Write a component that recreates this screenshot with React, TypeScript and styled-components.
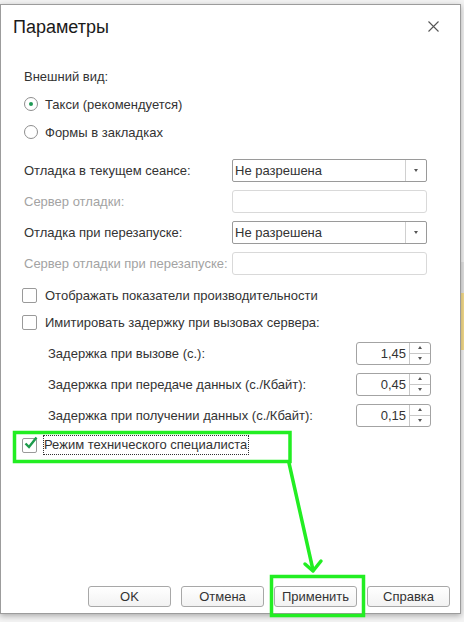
import styled, { createGlobalStyle } from 'styled-components';

const GlobalStyle = createGlobalStyle`
  html, body {
    margin: 0;
    padding: 0;
  }
  body {
    font-family: "Liberation Sans", Arial, sans-serif;
    color: #333;
    background: #fff;
  }
`;

const Page = styled.div`
  position: relative;
  width: 464px;
  height: 622px;
  overflow: hidden;
  padding-top: 4px;
  box-sizing: border-box;
  background:
    linear-gradient(to bottom,
      #f3f3f3 0, #f3f3f3 262px,
      #e4e4e4 262px, #e4e4e4 293px,
      #f6dc8c 293px, #f6dc8c 350px,
      #f4f4f4 350px, #f4f4f4 100%);
`;

const Dialog = styled.div`
  width: 461px;
  height: 610px;
  box-sizing: border-box;
  border: 1px solid #9c9c9c;
  background: #fff;
  box-shadow: 0 2px 6px rgba(0, 0, 0, 0.3);
  display: flex;
  flex-direction: column;
`;

const Header = styled.div`
  height: 57px;
  display: flex;
  align-items: flex-start;
  justify-content: space-between;
  padding: 10px 18px 0 12px;
  box-sizing: border-box;
`;

const Title = styled.div`
  font-size: 18px;
  line-height: 24px;
  color: #1a1a1a;
`;

const Close = styled.button`
  width: 14px;
  height: 14px;
  margin-top: 6px;
  padding: 0;
  border: none;
  background: none;
  display: flex;
`;

const Body = styled.div`
  flex: 1;
  display: flex;
  flex-direction: column;
`;

const Row = styled.div<{ $top?: number; $h?: number; $left?: number }>`
  height: ${p => p.$h ?? 24}px;
  margin-top: ${p => p.$top ?? 0}px;
  padding-left: ${p => p.$left ?? 23}px;
  display: flex;
  align-items: center;
  font-size: 13px;
`;

const FieldRow = styled(Row)`
  display: grid;
  grid-template-columns: 208px 195px;
  align-items: center;
`;

const DelayRow = styled(Row)`
  display: grid;
  grid-template-columns: 308px 75px;
  align-items: center;
`;

const Label = styled.span<{ $muted?: boolean }>`
  color: ${p => (p.$muted ? '#a3a3a3' : '#333')};
  white-space: nowrap;
`;

const RadioMark = styled.span<{ $on?: boolean }>`
  width: 12px;
  height: 12px;
  border: 1px solid #8e8e8e;
  border-radius: 50%;
  margin-right: 7px;
  display: flex;
  align-items: center;
  justify-content: center;
  background: #fff;
  &::after {
    content: '';
    width: 4px;
    height: 4px;
    border-radius: 50%;
    background: ${p => (p.$on ? '#1f9a55' : 'transparent')};
  }
`;

const Box = styled.span`
  width: 13px;
  height: 13px;
  border: 1px solid #9a9a9a;
  border-radius: 2px;
  margin-right: 8px;
  position: relative;
  flex-shrink: 0;
  background: #fff;
`;

const Tick = styled.svg`
  position: absolute;
  left: 1px;
  top: -3px;
`;

const Focused = styled.span`
  outline: 1px dotted #333;
  outline-offset: 0;
  padding: 1px 1px 2px 0;
  margin-left: -1px;
`;

const Select = styled.div`
  height: 23px;
  box-sizing: border-box;
  border: 1px solid #9a9a9a;
  border-radius: 2px;
  display: flex;
  align-items: stretch;
  background: #fff;
`;

const SelectText = styled.span`
  flex: 1;
  padding-left: 2px;
  display: flex;
  align-items: center;
  color: #333;
`;

const SelectBtn = styled.span`
  width: 20px;
  border-left: 1px solid #d0d0d0;
  display: flex;
  align-items: center;
  justify-content: center;
`;

const Arrow = styled.span<{ $up?: boolean }>`
  width: 0;
  height: 0;
  border-left: 2.5px solid transparent;
  border-right: 2.5px solid transparent;
  ${p => (p.$up ? 'border-bottom: 3px solid #555;' : 'border-top: 3px solid #555;')}
`;

const Input = styled.div`
  height: 23px;
  box-sizing: border-box;
  border: 1px solid #d9d9d9;
  border-radius: 3px;
  background: #fff;
`;

const Spin = styled.div`
  height: 23px;
  box-sizing: border-box;
  border: 1px solid #a3a3a3;
  border-radius: 3px;
  display: flex;
  background: #fff;
`;

const SpinValue = styled.span`
  flex: 1;
  text-align: right;
  padding-right: 3px;
  line-height: 21px;
  color: #333;
`;

const SpinBtns = styled.span`
  width: 20px;
  border-left: 1px solid #c8c8c8;
  display: flex;
  flex-direction: column;
`;

const SpinHalf = styled.span<{ $top?: boolean }>`
  flex: 1;
  display: flex;
  align-items: center;
  justify-content: center;
  ${p => (p.$top ? 'border-bottom: 1px solid #c8c8c8;' : '')}
`;

const Footer = styled.div`
  display: flex;
  justify-content: flex-end;
  gap: 10px;
  padding: 0 10px 6px 0;
`;

const Button = styled.button`
  width: 83px;
  height: 21px;
  box-sizing: border-box;
  border: 1px solid #a8a8a8;
  border-radius: 3px;
  background: linear-gradient(#ffffff, #f2f2f2);
  font-family: "Liberation Sans", Arial, sans-serif;
  font-size: 13px;
  color: #333;
  padding: 0;
`;

const Overlay = styled.svg`
  position: absolute;
  left: 0;
  top: 0;
  pointer-events: none;
`;

const Radio = ({ on, children }: { on?: boolean; children: string }) => (
  <>
    <RadioMark $on={on} />
    <Label>{children}</Label>
  </>
);

const Dropdown = ({ value }: { value: string }) => (
  <Select>
    <SelectText>{value}</SelectText>
    <SelectBtn><Arrow /></SelectBtn>
  </Select>
);

const Spinner = ({ value }: { value: string }) => (
  <Spin>
    <SpinValue>{value}</SpinValue>
    <SpinBtns>
      <SpinHalf $top><Arrow $up /></SpinHalf>
      <SpinHalf><Arrow /></SpinHalf>
    </SpinBtns>
  </Spin>
);

export default function App() {
  return (
    <Page>
      <GlobalStyle />
      <Dialog>
        <Header>
          <Title>Параметры</Title>
          <Close aria-label="Закрыть">
            <svg width="11" height="11" viewBox="0 0 11 11">
              <path d="M0.5 0.5L10.5 10.5M10.5 0.5L0.5 10.5" stroke="#555" strokeWidth="1.1" />
            </svg>
          </Close>
        </Header>
        <Body>
          <Row $h={28} $top={0}><Label>Внешний вид:</Label></Row>
          <Row $h={28}><Radio on>Такси (рекомендуется)</Radio></Row>
          <Row $h={28}><Radio>Формы в закладках</Radio></Row>

          <FieldRow $top={12}>
            <Label>Отладка в текущем сеансе:</Label>
            <Dropdown value="Не разрешена" />
          </FieldRow>
          <FieldRow $top={7}>
            <Label $muted>Сервер отладки:</Label>
            <Input />
          </FieldRow>
          <FieldRow $top={7}>
            <Label>Отладка при перезапуске:</Label>
            <Dropdown value="Не разрешена" />
          </FieldRow>
          <FieldRow $top={7}>
            <Label $muted>Сервер отладки при перезапуске:</Label>
            <Input />
          </FieldRow>

          <Row $h={27} $top={7} $left={21}>
            <Box />
            <Label>Отображать показатели производительности</Label>
          </Row>
          <Row $h={27} $left={21}>
            <Box />
            <Label>Имитировать задержку при вызовах сервера:</Label>
          </Row>

          <DelayRow $top={5} $left={47}>
            <Label>Задержка при вызове (с.):</Label>
            <Spinner value="1,45" />
          </DelayRow>
          <DelayRow $top={7} $left={47}>
            <Label>Задержка при передаче данных (с./Кбайт):</Label>
            <Spinner value="0,45" />
          </DelayRow>
          <DelayRow $top={7} $left={47}>
            <Label>Задержка при получении данных (с./Кбайт):</Label>
            <Spinner value="0,15" />
          </DelayRow>

          <Row $h={24} $top={6} $left={21}>
            <Box>
              <Tick width="14" height="14" viewBox="0 0 14 14">
                <path d="M1.5 7.5L5 11L12.5 1.5" fill="none" stroke="#1d9b4c" strokeWidth="2.4" />
              </Tick>
            </Box>
            <Focused>Режим технического специалиста</Focused>
          </Row>
        </Body>
        <Footer>
          <Button>OK</Button>
          <Button>Отмена</Button>
          <Button>Применить</Button>
          <Button>Справка</Button>
        </Footer>
      </Dialog>

      <Overlay width="464" height="622" viewBox="0 0 464 622">
        <g fill="none" stroke="#22ee22" strokeWidth="3.5">
          <rect x="14.5" y="432.5" width="275.5" height="29" />
          <path d="M289 463L313 570" strokeLinecap="round" />
          <path d="M305 564L313 571L321 561" strokeLinecap="round" strokeLinejoin="round" />
          <rect x="271.5" y="576.5" width="92" height="39" />
        </g>
      </Overlay>
    </Page>
  );
}
